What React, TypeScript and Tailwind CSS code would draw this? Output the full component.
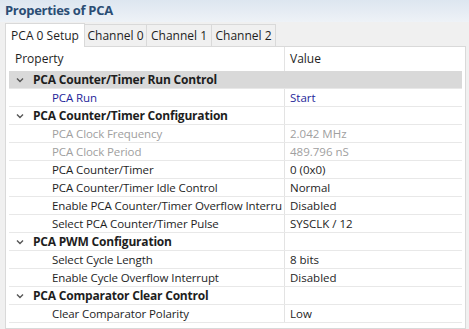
import React from 'react';

type Row =
  | { kind: 'group'; label: string; selected?: boolean }
  | { kind: 'item'; label: string; value: string; tone?: 'link' | 'muted' };

const rows: Row[] = [
  { kind: 'group', label: 'PCA Counter/Timer Run Control', selected: true },
  { kind: 'item', label: 'PCA Run', value: 'Start', tone: 'link' },
  { kind: 'group', label: 'PCA Counter/Timer Configuration' },
  { kind: 'item', label: 'PCA Clock Frequency', value: '2.042 MHz', tone: 'muted' },
  { kind: 'item', label: 'PCA Clock Period', value: '489.796 nS', tone: 'muted' },
  { kind: 'item', label: 'PCA Counter/Timer', value: '0 (0x0)' },
  { kind: 'item', label: 'PCA Counter/Timer Idle Control', value: 'Normal' },
  { kind: 'item', label: 'Enable PCA Counter/Timer Overflow Interru', value: 'Disabled' },
  { kind: 'item', label: 'Select PCA Counter/Timer Pulse', value: 'SYSCLK / 12' },
  { kind: 'group', label: 'PCA PWM Configuration' },
  { kind: 'item', label: 'Select Cycle Length', value: '8 bits' },
  { kind: 'item', label: 'Enable Cycle Overflow Interrupt', value: 'Disabled' },
  { kind: 'group', label: 'PCA Comparator Clear Control' },
  { kind: 'item', label: 'Clear Comparator Polarity', value: 'Low' },
];

const tabs = ['PCA 0 Setup', 'Channel 0', 'Channel 1', 'Channel 2'];

function Chevron() {
  return (
    <svg width="8" height="6" viewBox="0 0 8 6" className="shrink-0">
      <polyline points="1,1.5 4,4.5 7,1.5" fill="none" stroke="#555" strokeWidth="1.4" />
    </svg>
  );
}

export default function App() {
  return (
    <div
      className="w-[469px] h-[329px] overflow-hidden bg-[#f0f0f0] text-[11.5px] text-[#1e1e1e]"
      style={{ fontFamily: '"Open Sans", "Noto Sans", sans-serif' }}
    >
      {/* title */}
      <div className="h-[22px] flex items-center px-[5px] bg-gradient-to-b from-[#dde6f0] to-[#eef2f7]">
        <span className="font-bold text-[13px] text-[#2b4d74] tracking-[-0.3px]">Properties of PCA</span>
      </div>

      {/* tabs */}
      <div className="h-[24px] flex items-end pl-[5px] text-[12px]">
        {tabs.map((t, i) => (
          <div
            key={t}
            className={
              i === 0
                ? 'h-[24px] w-[80px] flex items-center justify-center bg-white border border-b-0 border-[#d9d9d9] -mb-px relative z-10'
                : 'h-[22px] flex items-center justify-center bg-[#f0f0f0] border border-l-0 border-b-0 border-[#d9d9d9] ' +
                  (i === 1 ? 'w-[62px]' : i === 2 ? 'w-[65px]' : 'w-[64px]')
            }
          >
            {t}
          </div>
        ))}
      </div>

      {/* panel */}
      <div className="ml-[5px] mr-[3px] h-[283px] bg-white border border-[#d9d9d9] pl-[3px] pr-[3px]">
        <div className="flex h-[24px] text-[12px]">
          <div className="w-[275px] flex items-center pl-[6px]">Property</div>
          <div className="flex-1 flex items-center pl-[5px] border-l border-[#e3e3e3]">Value</div>
        </div>
        {rows.map((r, i) =>
          r.kind === 'group' ? (
            <div
              key={i}
              className={'flex h-[18px] border-b border-[#e8e8e8] ' + (r.selected ? 'bg-[#d9d9d9]' : '')}
            >
              <div className="w-[275px] flex items-center pl-[7px] gap-[9px] font-bold text-[12px] tracking-[-0.2px]">
                <Chevron />
                <span>{r.label}</span>
              </div>
              <div className={'flex-1 ' + (r.selected ? '' : 'border-l border-[#e3e3e3]')} />
            </div>
          ) : (
            <div key={i} className="flex h-[18px] border-b border-[#e8e8e8]">
              <div
                className={
                  'w-[275px] flex items-center pl-[43px] whitespace-nowrap overflow-hidden tracking-[-0.1px] ' +
                  (r.tone === 'link' ? 'text-[#1f1f9a]' : r.tone === 'muted' ? 'text-[#a0a0a0]' : '')
                }
              >
                {r.label}
              </div>
              <div
                className={
                  'flex-1 flex items-center pl-[5px] border-l border-[#e3e3e3] ' +
                  (r.tone === 'link' ? 'text-[#1f1f9a]' : r.tone === 'muted' ? 'text-[#a0a0a0]' : '')
                }
              >
                {r.value}
              </div>
            </div>
          ),
        )}
      </div>
    </div>
  );
}
